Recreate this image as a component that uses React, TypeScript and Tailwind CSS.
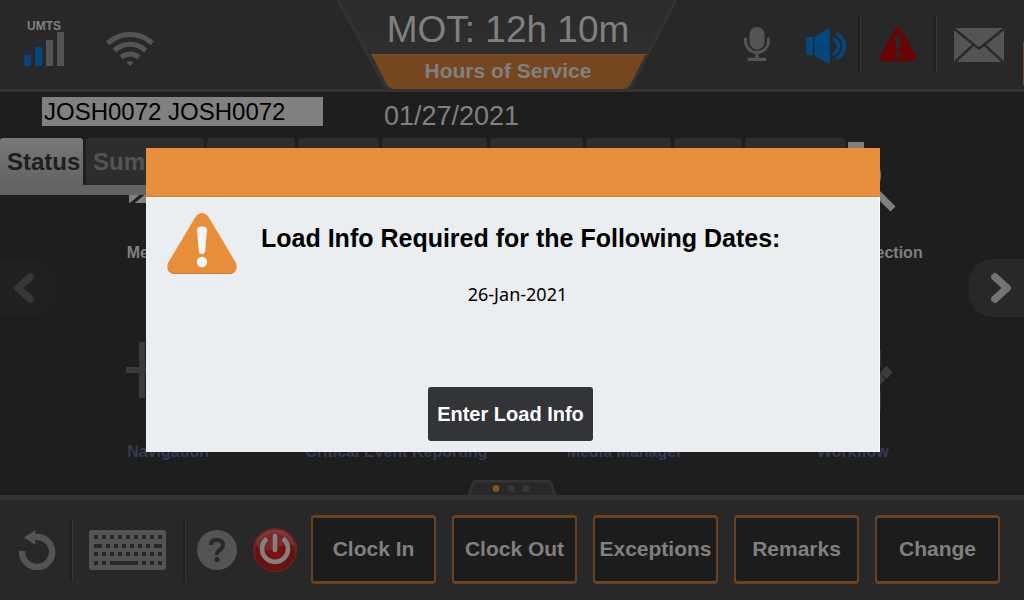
import React from "react";

type IconProps = { className?: string };

const SignalBars = () => (
  <svg width="40" height="34" viewBox="0 0 40 34" aria-hidden="true">
    <rect x="0" y="23" width="7" height="11" fill="#04477f" />
    <rect x="11" y="15" width="7" height="19" fill="#04477f" />
    <rect x="22" y="8" width="7" height="26" fill="#545454" />
    <rect x="33" y="0" width="7" height="34" fill="#545454" />
  </svg>
);

const Wifi = ({ className }: IconProps) => (
  <svg className={className} width="48" height="34" viewBox="0 0 48 34" fill="none" stroke="#545454" strokeWidth="5" aria-hidden="true">
    <path d="M1.8 11.4 A32 32 0 0 1 46.2 11.4" />
    <path d="M8.4 18.6 A22.5 22.5 0 0 1 39.6 18.6" />
    <path d="M15.2 25.4 A13 13 0 0 1 32.8 25.4" />
    <path d="M20.6 30.6 Q24 27.6 27.4 30.6 L24 34Z" fill="#545454" stroke="none" />
  </svg>
);

const Mic = () => (
  <svg width="26" height="34" viewBox="0 0 26 34" aria-hidden="true">
    <rect x="5.5" y="0" width="15" height="22.5" rx="7.5" fill="#545454" />
    <path d="M1.5 12 V14 A11.5 11.5 0 0 0 24.5 14 V12" fill="none" stroke="#545454" strokeWidth="3" strokeLinecap="round" />
    <path d="M13 25 V32 M5 32.4 H21" fill="none" stroke="#545454" strokeWidth="3.2" strokeLinecap="round" />
  </svg>
);

const Speaker = () => (
  <svg width="42" height="34" viewBox="0 0 42 34" aria-hidden="true">
    <path d="M0 8 H7 V26 H0Z M8.4 8 L20 .8 Q24 -1.4 24 2 V32 Q24 35.4 20 33.2 L8.4 26Z" fill="#04477f" />
    <path d="M28 10.4 A8 8 0 0 1 28 24.6 M31.4 5.4 A13.6 13.6 0 0 1 31.4 29" fill="none" stroke="#04477f" strokeWidth="3.6" strokeLinecap="round" />
  </svg>
);

const Alert = () => (
  <svg width="38" height="34" viewBox="0 0 38 34" aria-hidden="true">
    <path d="M16.6 1.6 Q19 -1.2 21.4 1.6 L37.4 29.6 Q38.8 34 34.6 34 H3.4 Q-.8 34 .6 29.6Z" fill="#6b0303" />
    <path d="M16 9.4 Q19 7 22 9.4 L21 22.4 H17Z" fill="#282828" />
    <circle cx="19" cy="27.4" r="2.8" fill="#282828" />
  </svg>
);

const Mail = () => (
  <svg width="50" height="34" viewBox="0 0 50 34" aria-hidden="true">
    <rect width="50" height="34" fill="#545454" />
    <path d="M0 .6 L22 18.4 L25 20.6 L28 18.4 L50 .6 M1 34 L19.6 16.6 M49 34 L30.4 16.6" fill="none" stroke="#282828" strokeWidth="2.4" />
  </svg>
);

const WarningSign = () => (
  <svg className="shrink-0" width="70" height="61" viewBox="0 0 70 61" aria-hidden="true">
    <path d="M28.4 4 Q35 -4 41.6 4 L69 50 Q72 60 62 61 H8 Q-2 60 1 50Z" fill="#e88e3b" />
    <path d="M3 58 Q5 60.5 8 60.5 H62 Q65 60.5 67 58" fill="none" stroke="#cf7c2e" />
    <path d="M30 17 Q30 13.6 35 13.6 Q40 13.6 40 17 L38.2 38 Q38 41 35 41 Q32 41 31.8 38Z" fill="#f4f6f8" />
    <circle cx="35" cy="49" r="5.2" fill="#f4f6f8" />
  </svg>
);

const Chevron = ({ flip, color }: { flip?: boolean; color: string }) => (
  <svg width="22" height="32" viewBox="0 0 22 32" fill="none" stroke={color} strokeWidth="7.6" strokeLinecap="round" strokeLinejoin="round" aria-hidden="true">
    {flip ? <path d="M17 5 L5 16 L17 27" /> : <path d="M5 5 L17 16 L5 27" />}
  </svg>
);

const Undo = () => (
  <svg width="37" height="40" viewBox="0 0 37 40" aria-hidden="true">
    <path d="M3.2 21 A15 15 0 1 0 16 7.2" fill="none" stroke="#545454" strokeWidth="6.4" />
    <path d="M5 7.5 L16.4 0 V15Z" fill="#545454" />
  </svg>
);

const keyRow = (y: number, keys: [number, number][]) =>
  keys.map(([x, w]) => <rect key={`${x}-${y}`} x={x} y={y} width={w} height="4" fill="#282828" />);

const Keyboard = () => (
  <svg width="77" height="40" viewBox="0 0 77 40" aria-hidden="true">
    <rect width="77" height="40" rx="3" fill="#545454" />
    {keyRow(5, [[5, 4], [13, 4], [21, 4], [29, 4], [37, 4], [45, 4], [53, 4], [61, 4], [69, 4]])}
    {keyRow(14, [[5, 8], [17, 4], [25, 4], [33, 4], [41, 4], [49, 4], [57, 4], [65, 8]])}
    {keyRow(22, [[5, 4], [13, 4], [21, 4], [29, 4], [37, 4], [45, 4], [53, 4], [61, 4], [69, 4]])}
    {keyRow(31, [[5, 4], [13, 4], [21, 28], [53, 4], [61, 4], [69, 4]])}
  </svg>
);

const Help = () => (
  <svg width="40" height="40" viewBox="0 0 40 40" aria-hidden="true">
    <circle cx="20" cy="20" r="20" fill="#545454" />
    <path d="M14 15 Q14 10 20 10 Q26 10 26 15 Q26 18 22.6 20 Q20 21.6 20 25" fill="none" stroke="#282828" strokeWidth="4" />
    <circle cx="20" cy="29.6" r="2.6" fill="#282828" />
  </svg>
);

const Power = () => (
  <svg width="44" height="46" viewBox="0 0 44 46" aria-hidden="true">
    <defs>
      <radialGradient id="power" cx="50%" cy="60%" r="55%">
        <stop offset="0" stopColor="#7d1414" />
        <stop offset=".8" stopColor="#611212" />
        <stop offset="1" stopColor="#7d3030" />
      </radialGradient>
    </defs>
    <circle cx="22" cy="23" r="21.4" fill="url(#power)" stroke="#702222" strokeWidth="1.2" />
    <path d="M3 18 A19.5 19.5 0 0 1 41 18 Q30 17 22 22 Q12 26 3 18Z" fill="#8c4a4a" opacity=".4" />
    <path d="M14 11.6 A13 13 0 1 0 30 11.6" fill="none" stroke="#858080" strokeWidth="4.6" />
    <path d="M22 9 V23" stroke="#858080" strokeWidth="4.6" strokeLinecap="round" />
  </svg>
);

const Separator = ({ className }: IconProps) => (
  <div className={`w-[3px] shrink-0 border-r border-[#363636] bg-[#202020] ${className ?? ""}`} />
);

const EnvelopeTile = () => (
  <svg width="96" height="72" viewBox="0 0 96 72" aria-hidden="true">
    <rect x="9" y="10" width="78" height="50" fill="#808080" />
    <path d="M11 61 L40 37 M85 61 L56 37 M9 10 L48 44 L87 10" fill="none" stroke="#1e1e1e" strokeWidth="3" />
  </svg>
);

const MagnifierTile = () => (
  <svg width="96" height="72" viewBox="0 0 96 72" fill="none" stroke="#808080" aria-hidden="true">
    <circle cx="53" cy="32" r="20.5" strokeWidth="5" />
    <path d="M70 48 L88 66" strokeWidth="7" />
  </svg>
);

const CrosshairTile = () => (
  <svg width="96" height="72" viewBox="0 0 96 72" fill="none" stroke="#3a3a3a" strokeWidth="6" aria-hidden="true">
    <path d="M22 0 V56 M6 28 H60" />
  </svg>
);

const FlowTile = () => (
  <svg width="96" height="72" viewBox="0 0 96 72" fill="#3d3d3d" aria-hidden="true">
    <rect x="77" y="26" width="9" height="9" rx="1" transform="rotate(45 81.5 30.5)" />
    <path d="M66 38 L75 30 L80 38 L75 43Z" />
    <path d="M75.5 8 V24 M75.5 49 V69" stroke="#333333" />
  </svg>
);

const tiles = [
  { label: "Messaging", icon: <EnvelopeTile />, tone: "text-[#808080]", cell: "col-start-1" },
  { label: "Vehicle Inspection", icon: <MagnifierTile />, tone: "text-[#808080]", cell: "col-start-4" },
  { label: "Navigation", icon: <CrosshairTile />, tone: "text-[#363a52]", cell: "col-start-1" },
  { label: "Critical Event Reporting", icon: null, tone: "text-[#363a52]", cell: "col-start-2" },
  { label: "Media Manager", icon: null, tone: "text-[#363a52]", cell: "col-start-3" },
  { label: "Workflow", icon: <FlowTile />, tone: "text-[#363a52]", cell: "col-start-4" },
];

const tabWidths = ["w-[88px]", "w-[81px]", "w-[105px]", "w-[93px]", "w-[85px]", "w-[68px]", "w-[100px]"];
const actions = ["Clock In", "Clock Out", "Exceptions", "Remarks", "Change"];

function Header() {
  return (
    <header className="relative grid h-[92px] grid-cols-[338fr_340fr_346fr] border-b-[3px] border-[#333333] bg-[#282828]">
      <div className="flex items-start pt-5 pl-6">
        <div className="flex w-10 flex-col items-center">
          <span className="text-[12px] leading-[12px] font-bold text-[#808080]">UMTS</span>
          <SignalBars />
        </div>
        <Wifi className="mt-3 ml-[42px]" />
      </div>
      <div className="relative">
        <svg className="absolute inset-0 h-full w-full overflow-visible" viewBox="0 0 340 89" preserveAspectRatio="none" aria-hidden="true">
          <defs>
            <linearGradient id="panel" x1="0" y1="0" x2="0" y2="1">
              <stop offset="0" stopColor="#2b2b2b" />
              <stop offset="1" stopColor="#313131" />
            </linearGradient>
          </defs>
          <path d="M0 0 H338 L294 84 Q290 91 284 91 H57 Q50 91 46 84Z" fill="url(#panel)" />
          <path d="M0 0 L46 84 Q49 90 56 90.5 H285 Q291 90 294 84 L338 0" fill="none" stroke="#333333" strokeWidth="3" />
          <path d="M33 54 H308 L293 83 Q290 89 284 89 H57 Q51 89 48 83Z" fill="#74471f" />
          <path d="M33 54.5 H308" stroke="#7d4f28" />
        </svg>
        <div className="relative flex flex-col items-center">
          <div className="h-[54px] pt-1.5 text-[37px] leading-[48px] whitespace-nowrap text-[#808080]">MOT: 12h 10m</div>
          <a href="#hours" className="text-[21px] leading-[34px] font-bold whitespace-nowrap text-[#808080]">Hours of Service</a>
        </div>
      </div>
      <div className="flex items-start justify-end pt-[17px] pr-5">
        <button aria-label="Microphone" className="mt-2.5"><Mic /></button>
        <button aria-label="Volume" className="mt-3 ml-9"><Speaker /></button>
        <Separator className="ml-[10px] h-[55px]" />
        <button aria-label="Alerts" className="mt-2.5 ml-[18px]"><Alert /></button>
        <Separator className="ml-[17px] h-[55px]" />
        <button aria-label="Messages" className="mt-[11px] ml-[17px]"><Mail /></button>
      </div>
      <div className="absolute top-[42px] right-0 h-[43px] w-px bg-[#74471f]" />
    </header>
  );
}

function Tabs() {
  return (
    <div className="relative z-10 flex w-[864px] items-start gap-[3px]">
      <div role="tablist" className="flex items-start gap-[3px] border-b-[10px] border-[#636363]">
        <button role="tab" aria-selected="true" className="h-[47px] w-[83px] rounded-t-[3px] bg-linear-to-b from-[#787878] to-[#636363] pl-[7px] text-left text-[24px] font-bold text-[#1e1e1e]">
          Status
        </button>
        <button role="tab" aria-selected="false" className="h-[47px] w-[118px] overflow-hidden rounded-t-[3px] bg-[#2d2d2d] pl-[7px] text-left text-[24px] font-bold text-[#545454]">
          Summary
        </button>
        {tabWidths.map((w) => (
          <div key={w} className={`h-[47px] rounded-t-[3px] bg-[#2d2d2d] ${w}`} />
        ))}
      </div>
      <div className="mt-1 h-8 w-4 rounded-t-[1px] bg-[#808080]" />
    </div>
  );
}

function Dialog() {
  return (
    <div className="fixed inset-0 z-20 flex items-center justify-center pl-0.5">
      <div role="dialog" aria-modal="true" aria-labelledby="dialog-title" className="w-[734px] max-w-full bg-[#eaeef1]">
        <div className="h-[49px] border-b border-[#d27d30] bg-[#e98e3c]" />
        <div className="flex flex-col border-t border-r border-white pt-[15px] pb-[11px]">
          <div className="flex items-start gap-6 pl-[21px]">
            <WarningSign />
            <h1 id="dialog-title" className="mt-2.5 text-[25px] leading-[30px] font-bold text-black">Load Info Required for the Following Dates:</h1>
          </div>
          <p className="mt-2 pl-2.5 text-center font-['Noto_Sans',sans-serif] text-[18px] leading-[24px] text-black">26-Jan-2021</p>
          <div className="mt-[81px] flex justify-center pr-1">
            <button className="h-[54px] w-[165px] rounded-[3px] bg-[#333438] text-[20px] font-bold text-white">Enter Load Info</button>
          </div>
        </div>
      </div>
    </div>
  );
}

export default function App() {
  return (
    <div className="flex min-h-screen flex-col overflow-hidden bg-[#1e1e1e] font-['Liberation_Sans',Arial,sans-serif]">
      <Header />
      <main className="relative flex flex-1 flex-col">
        <div className="flex h-[46px] items-start gap-[61px] pt-[5px] pl-[42px]">
          <input aria-label="Driver" defaultValue="JOSH0072 JOSH0072" className="h-[29px] w-[281px] bg-[#808080] pl-0.5 text-[24px] leading-[28px] text-black outline-none" />
          <time className="pt-1 text-[27px] leading-[30px] text-[#808080]">01/27/2021</time>
        </div>
        <Tabs />
        <div className="-mt-[52px] grid grid-cols-4 gap-y-[79px] pr-[57px] pl-[54px]">
          {tiles.map((t) => (
            <a key={t.label} href="#app" className={`flex h-[120px] flex-col items-center justify-between text-[16px] leading-[20px] font-bold whitespace-nowrap ${t.tone} ${t.cell}`}>
              <span className="h-[72px] w-24">{t.icon}</span>
              {t.label}
            </a>
          ))}
        </div>
        <button aria-label="Previous page" className="absolute top-[167px] left-0 flex h-[57px] w-14 items-center rounded-r-[22px] bg-[#202020] pl-[13px]">
          <Chevron flip color="#373737" />
        </button>
        <button aria-label="Next page" className="absolute top-[167px] right-0 flex h-[58px] w-[55px] items-center rounded-l-[24px] bg-[#282828] pl-[21px]">
          <Chevron color="#747474" />
        </button>
        <svg className="mt-auto self-center" width="88" height="15" viewBox="0 0 88 15" aria-hidden="true">
          <path d="M1 15 L5 4 Q6 1 9 1 H79 Q82 1 83 4 L87 15" fill="#282828" stroke="#333333" strokeWidth="3" />
          <circle cx="28" cy="8.5" r="3.5" fill="#855317" />
          <circle cx="43" cy="8.5" r="3.5" fill="#373737" />
          <circle cx="58" cy="8.5" r="3.5" fill="#373737" />
        </svg>
      </main>
      <footer className="flex items-center border-t-[5px] border-[#333333] bg-[#282828] pt-[15px] pr-6 pb-4 pl-[19px]">
        <button aria-label="Back"><Undo /></button>
        <Separator className="ml-[14px] h-[62px]" />
        <button aria-label="Keyboard" className="ml-4"><Keyboard /></button>
        <Separator className="ml-[17px] h-[62px]" />
        <button aria-label="Help" className="ml-[11px]"><Help /></button>
        <button aria-label="Power" className="ml-4"><Power /></button>
        <div className="ml-[14px] flex flex-1 gap-4">
          {actions.map((a) => (
            <button key={a} className="h-[69px] flex-1 basis-0 rounded-[4px] border-x-2 border-y-[3px] border-[#6b4220] bg-[#1c1c1c] pb-0.5 text-[21px] font-bold whitespace-nowrap text-[#808080]">
              {a}
            </button>
          ))}
        </div>
      </footer>
      <Dialog />
    </div>
  );
}
